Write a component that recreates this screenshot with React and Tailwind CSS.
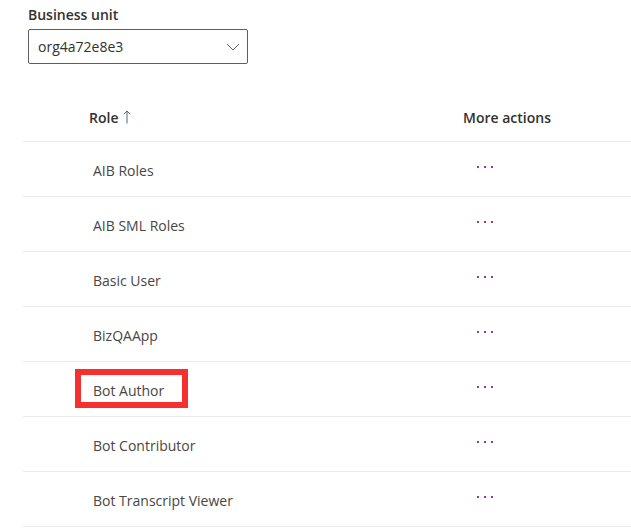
import React from 'react';

const roles = ['AIB Roles', 'AIB SML Roles', 'Basic User', 'BizQAApp', 'Bot Author', 'Bot Contributor', 'Bot Transcript Viewer'];

function Dots() {
  return (
    <div className="flex gap-[5px] items-center">
      <span className="w-[2px] h-[2px] bg-[#8a3a99]"></span>
      <span className="w-[2px] h-[2px] bg-[#8a3a99]"></span>
      <span className="w-[2px] h-[2px] bg-[#8a3a99]"></span>
    </div>
  );
}

export default function App() {
  return (
    <div className="w-[631px] h-[531px] overflow-hidden bg-white text-[#323130] font-['Open_Sans',sans-serif] text-[14px]">
      <div className="pl-[28px] pt-[5px]">
        <div className="font-semibold text-[14px] leading-[20px]">Business unit</div>
        <div className="mt-[4px] w-[220px] h-[35px] border border-[#605e5c] rounded-[2px] flex items-center justify-between pl-[9px] pr-[7px]">
          <span className="text-[14px]">org4a72e8e3</span>
          <svg width="14" height="8" viewBox="0 0 14 8" fill="none">
            <path d="M1 1l6 6 6-6" stroke="#605e5c" strokeWidth="1" />
          </svg>
        </div>
      </div>
      <div className="ml-[23px] mt-[32px]">
        <div className="h-[46px] pb-[3px] border-b border-[#edebe9] flex items-center font-semibold text-[14px]">
          <div className="w-[440px] pl-[66px] flex items-center gap-[5px]">
            <span>Role</span>
            <svg width="8" height="14" viewBox="0 0 8 14" fill="none">
              <path d="M4 13.5V1M0.8 4.2L4 1l3.2 3.2" stroke="#4a6b80" strokeWidth="1" />
            </svg>
          </div>
          <div>More actions</div>
        </div>
        {roles.map((r) => (
          <div key={r} className="h-[55px] border-b border-[#edebe9] flex items-center">
            <div className="w-[440px] pl-[70px] pt-[3px]">
              <span className="relative text-[#484644]">
                {r}
                {r === 'Bot Author' && (
                  <span className="absolute left-[-18px] top-[-12px] w-[113px] h-[39px] border-[6px] border-[#f5302e]"></span>
                )}
              </span>
            </div>
            <div className="pl-[14px] pb-[4px]">
              <Dots />
            </div>
          </div>
        ))}
      </div>
    </div>
  );
}
